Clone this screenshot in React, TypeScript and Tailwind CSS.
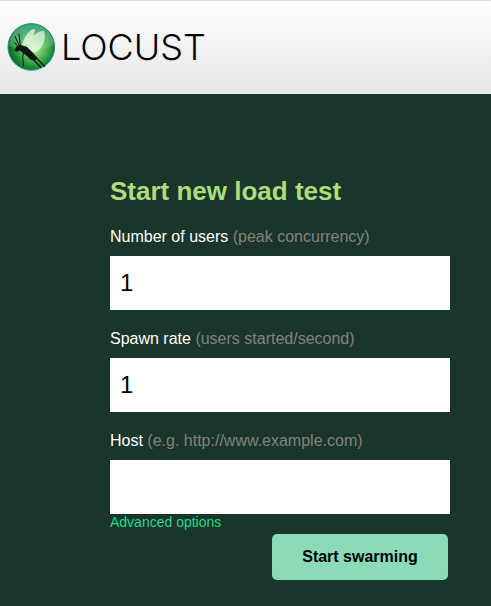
import type { InputHTMLAttributes } from "react";

function LocustMark() {
  return (
    <svg viewBox="21 24 144 144" className="size-12 shrink-0" aria-hidden="true">
      <defs>
        <radialGradient id="ball" cx="0.55" cy="0.52" r="0.55">
          <stop offset="0" stopColor="#c4f0b4" />
          <stop offset="0.35" stopColor="#6cc968" />
          <stop offset="0.75" stopColor="#1c8a34" />
          <stop offset="1" stopColor="#0b6030" />
        </radialGradient>
        <linearGradient id="gloss" x1="0" y1="0" x2="0" y2="1">
          <stop offset="0" stopColor="#3fae82" stopOpacity="0.9" />
          <stop offset="1" stopColor="#b4ecb0" stopOpacity="0.15" />
        </linearGradient>
        <linearGradient id="rim" x1="0" y1="0" x2="0" y2="1">
          <stop offset="0" stopColor="#1b7a5a" />
          <stop offset="1" stopColor="#2aa5a0" />
        </linearGradient>
      </defs>
      <circle cx="94" cy="96" r="70" fill="url(#ball)" stroke="url(#rim)" strokeWidth="3" />
      <path d="M27 92C29 52 60 28 94 28s65 24 67 60c-20 14-44 18-66 18-26 0-46-4-68-14z" fill="url(#gloss)" />
      <path d="M66 91C72 66 88 44 103 41c6 8-8 38-29 53z" fill="#eefbe8" fillOpacity="0.75" />
      <path d="M78 96C88 68 112 46 132 48c8 22-4 50-22 63-12 2-24-6-32-15z" fill="#eefbe8" fillOpacity="0.7" />
      <path d="M46 101l4-8 9-4 11 3 11 4 10 10 10 10 12 14-8 7-13-3-14-13-10-8-10-7-6 4-8-3z" fill="#101812" />
      <g fill="none" stroke="#101812" strokeWidth="3" strokeLinecap="round" strokeLinejoin="round">
        <path d="M57 91l-12-27" />
        <path d="M61 90l-4-33" />
        <path d="M51 91l-7-8" />
        <path d="M72 106l-4 22 3 25" />
        <path d="M100 121l34 33" strokeWidth="4" />
        <path d="M94 128l28 28" strokeWidth="4" />
      </g>
    </svg>
  );
}

type FieldProps = InputHTMLAttributes<HTMLInputElement> & {
  id: string;
  label: string;
  hint: string;
};

function Field({ id, label, hint, ...input }: FieldProps) {
  return (
    <div>
      <label htmlFor={id} className="block pb-1.5 text-base leading-[26px] text-white">
        {label} <span className="text-[#828282]">({hint})</span>
      </label>
      <input
        id={id}
        name={id}
        className="block h-[54px] w-full bg-white px-2.5 text-2xl text-black outline-none"
        {...input}
      />
    </div>
  );
}

export default function App() {
  return (
    <div className="flex min-h-screen flex-col bg-[#1a352a] font-['Liberation_Sans',Arial,sans-serif]">
      <header className="flex h-[94px] items-center border-t border-[#ddd] bg-linear-to-b from-white to-[#e6e6e6] px-[7px] pb-0.5">
        <a href="/" aria-label="Locust" className="flex items-center gap-1.5">
          <LocustMark />
          <span className="font-['Inter',sans-serif] text-4xl leading-none font-light text-black">LOCUST</span>
        </a>
      </header>
      <main className="flex-1 pt-20 pr-[41px] pb-6 pl-[110px]">
        <form className="max-w-[340px]" onSubmit={(e) => e.preventDefault()}>
          <h2 className="pb-4 text-[26px] leading-[34px] font-bold text-[#addc7b]">Start new load test</h2>
          <div className="flex flex-col gap-4">
            <Field id="user_count" label="Number of users" hint="peak concurrency" defaultValue="1" />
            <Field id="spawn_rate" label="Spawn rate" hint="users started/second" defaultValue="1" />
            <Field id="host" label="Host" hint="e.g. http://www.example.com" />
          </div>
          <a href="#advanced" className="block text-sm leading-4 text-[#22d98b]">
            Advanced options
          </a>
          <div className="flex justify-end pt-1 pr-0.5">
            <button
              type="submit"
              className="h-[46px] w-44 rounded-[5px] bg-[#8bdbb9] text-base font-bold text-black"
            >
              Start swarming
            </button>
          </div>
        </form>
      </main>
    </div>
  );
}
